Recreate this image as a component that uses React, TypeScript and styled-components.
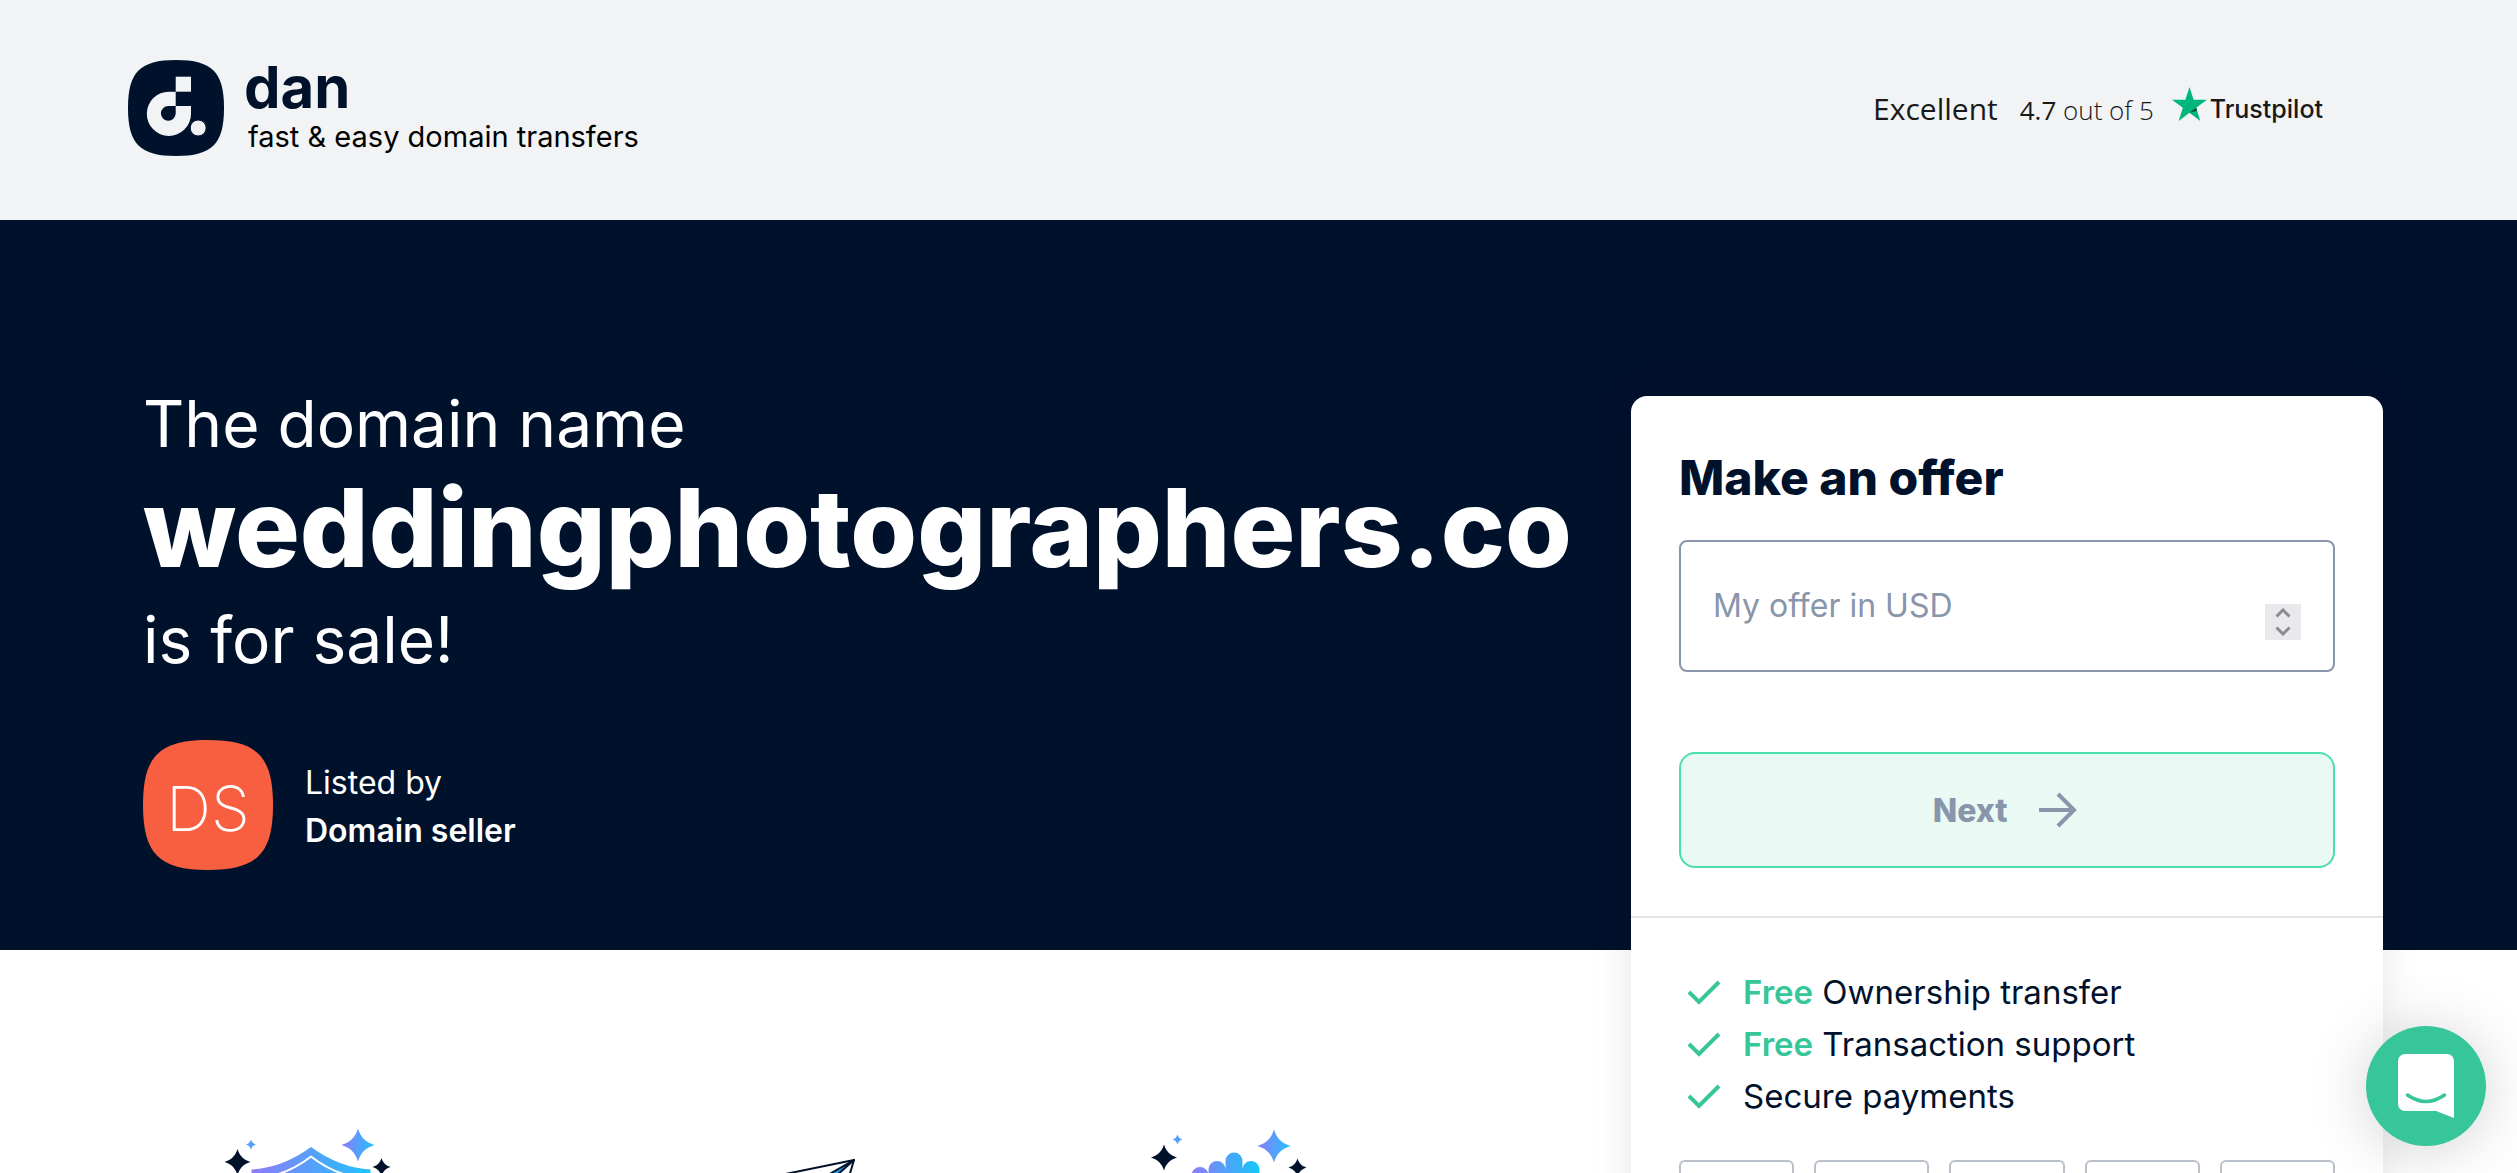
import React, { useState } from "react";
import styled, { createGlobalStyle } from "styled-components";

const navy = "#00112c";
const green = "#37c699";
const slate = "#8995ab";

const GlobalStyle = createGlobalStyle`
  * { box-sizing: border-box; }
  body {
    margin: 0;
    background: #fff;
    color: ${navy};
    font-family: Inter, "Liberation Sans", sans-serif;
  }
  h1, h2, p, ul { margin: 0; padding: 0; }
`;

const Page = styled.div`
  height: 100vh;
  overflow: hidden;
`;

const Header = styled.header`
  display: flex;
  align-items: center;
  justify-content: space-between;
  height: 220px;
  padding: 0 194px 4px 128px;
  background: #f1f3f4;
`;

const Brand = styled.a`
  display: flex;
  align-items: center;
  gap: 20px;
  color: ${navy};
  text-decoration: none;
`;

const BrandText = styled.span`
  display: flex;
  flex-direction: column;
  gap: 2px;
  padding-top: 4px;
`;

const BrandName = styled.span`
  font-size: 58px;
  font-weight: 700;
  line-height: 52px;
`;

const Tagline = styled.span`
  padding-left: 4px;
  color: #000;
  font-size: 29px;
  line-height: 44px;
`;

const Rating = styled.a`
  display: flex;
  align-items: center;
  gap: 18px;
  color: #191919;
  font-family: "Open Sans", "Noto Sans", sans-serif;
  text-decoration: none;
`;

const RatingText = styled.span`
  display: flex;
  align-items: baseline;
  gap: 22px;
  padding-top: 2px;
  line-height: 48px;
`;

const RatingWord = styled.span`
  font-size: 30px;
`;

const RatingScore = styled.span`
  font-size: 26px;
  font-weight: 300;
  b { font-weight: 400; }
`;

const Trustpilot = styled.span`
  display: flex;
  align-items: flex-start;
  gap: 3px;
  margin-bottom: 8px;
  font-family: Inter, sans-serif;
  font-size: 25px;
  font-weight: 500;
  line-height: 24px;
`;

const TrustpilotName = styled.span`
  padding-top: 10px;
`;

const Hero = styled.section`
  position: relative;
  z-index: 1;
  display: grid;
  grid-template-columns: minmax(0, 1fr) 752px;
  align-items: start;
  padding: 172px 134px 80px 143px;
  background: ${navy};
  color: #fff;
`;

const Headline = styled.h1`
  display: flex;
  flex-direction: column;
  font-size: 64px;
  font-weight: 400;
  line-height: 64px;
  white-space: nowrap;
`;

const DomainName = styled.strong`
  margin-bottom: 8px;
  font-size: 108px;
  font-weight: 800;
  line-height: 144px;
`;

const Seller = styled.div`
  display: flex;
  align-items: center;
  gap: 32px;
  margin-top: 68px;
  font-size: 32px;
  line-height: 48px;
`;

const SellerText = styled.div`
  padding-top: 4px;
`;

const Avatar = styled.svg`
  display: block;
  width: 130px;
  height: 130px;
`;

const SellerName = styled.p`
  font-weight: 600;
`;

const Card = styled.aside`
  margin: 4px 0 -600px;
  border-radius: 16px;
  background: #fff;
  color: ${navy};
  box-shadow: 0 0 40px rgba(0, 0, 0, 0.1);
`;

const OfferForm = styled.form`
  padding: 48px;
  border-bottom: 2px solid #e5e5e5;
`;

const CardTitle = styled.h2`
  font-size: 48px;
  font-weight: 800;
  line-height: 68px;
`;

const Field = styled.div`
  display: flex;
  align-items: center;
  height: 132px;
  margin: 28px 0 80px;
  padding: 0 32px;
  border: 2px solid ${slate};
  border-radius: 8px;
`;

const OfferInput = styled.input`
  flex: 1;
  min-width: 0;
  padding: 0;
  border: 0;
  outline: 0;
  background: none;
  color: ${navy};
  font-family: inherit;
  font-size: 32px;
  line-height: 48px;
  appearance: textfield;
  &::placeholder { color: ${slate}; opacity: 1; }
  &::-webkit-inner-spin-button { appearance: none; }
`;

const Stepper = styled.div`
  display: flex;
  flex-direction: column;
  align-self: flex-end;
  margin-bottom: 30px;
`;

const StepButton = styled.button`
  display: flex;
  align-items: center;
  justify-content: center;
  width: 36px;
  height: 18px;
  padding: 0;
  border: 0;
  background: #e9e8ec;
  color: #8b8b90;
`;

const NextButton = styled.button`
  display: flex;
  align-items: center;
  justify-content: center;
  gap: 32px;
  width: 100%;
  height: 116px;
  padding: 0 4px 0 0;
  border: 2px solid #4bdfae;
  border-radius: 16px;
  background: #e9faf5;
  color: ${slate};
  font-family: inherit;
  font-size: 32px;
  font-weight: 800;
`;

const Benefits = styled.div`
  padding: 48px;
`;

const BenefitList = styled.ul`
  list-style: none;
  font-size: 33px;
  line-height: 52px;
`;

const Benefit = styled.li`
  display: flex;
  align-items: center;
  gap: 22px;
  padding-left: 8px;
  b { color: ${green}; font-weight: 600; }
`;

const PaymentMethods = styled.div`
  display: grid;
  grid-template-columns: repeat(5, 1fr);
  gap: 20px;
  margin-top: 38px;
`;

const PaymentMethod = styled.div`
  height: 72px;
  border: 2px solid #bac0ca;
  border-radius: 6px;
`;

const Features = styled.section`
  display: grid;
  grid-template-columns: repeat(3, 1fr);
  justify-items: center;
  padding: 160px 1052px 0 80px;
`;

const ChatButton = styled.button`
  position: fixed;
  z-index: 2;
  right: 31px;
  bottom: 27px;
  display: flex;
  align-items: center;
  justify-content: center;
  width: 120px;
  height: 120px;
  padding: 0;
  border: 0;
  border-radius: 50%;
  background: ${green};
  box-shadow: 0 4px 60px rgba(0, 0, 0, 0.18);
`;

const Squircle = ({ fill }: { fill: string }) => (
  <path
    fill={fill}
    d="M48 0C84 0 96 12 96 48S84 96 48 96 0 84 0 48 12 0 48 0Z"
  />
);

const LogoMark = () => (
  <svg width="96" height="96" viewBox="0 0 96 96" aria-hidden="true">
    <Squircle fill={navy} />
    <path fill="#f1f3f4" d="M47.7 16.7H63V31.7H47.7Z" />
    <path
      fill="#f1f3f4"
      fillRule="evenodd"
      d="M47.7 31.7H41A22.1 22.1 0 1 0 63 54V46H47.7ZM47.7 46V53.6A7.4 7.4 0 1 1 40.3 46Z"
    />
    <circle cx="70.2" cy="68" r="8" fill="#f1f3f4" stroke={navy} strokeWidth="1" />
  </svg>
);

const TrustStar = () => (
  <svg width="35" height="34" viewBox="0 0 34 33" aria-hidden="true">
    <path fill="#00b67a" d="M17 0L21 12.4H34L23.500 20.200 27.500 33 17 25 6.500 33 10.500 20.200 0 12.4H13Z" />
    <path fill="#005128" d="M24.400 23L23.500 20.200 17 25Z" />
  </svg>
);

const Check = () => (
  <svg width="34" height="26" viewBox="0 0 34 26" fill="none" aria-hidden="true">
    <path d="M2 13L12 23 32 3" stroke={green} strokeWidth="4" />
  </svg>
);

type StarProps = { x: number; y: number; r: number; fill?: string };

const Sparkle = ({ x, y, r, fill = navy }: StarProps) => (
  <path
    transform={`translate(${x} ${y}) scale(${r})`}
    fill={fill}
    d="M0-1C.17-.46.46-.17 1 0 .46.17.17.46 0 1-.17.46-.46.17-1 0-.46-.17-.17-.46 0-1Z"
  />
);

const Gradient = ({ id, local }: { id: string; local?: boolean }) => (
  <linearGradient
    id={id}
    gradientUnits={local ? "objectBoundingBox" : "userSpaceOnUse"}
    x1={local ? 0 : 40}
    x2={local ? 1 : 160}
    y1="0"
    y2="0"
  >
    <stop offset="0" stopColor="#8f7bf7" />
    <stop offset="0.5" stopColor="#569ffb" />
    <stop offset="1" stopColor="#1fc3fd" />
  </linearGradient>
);

const ShieldArt = () => (
  <svg width="200" height="200" viewBox="0 0 200 200" aria-hidden="true">
    <defs>
      <Gradient id="shield" />
      <Gradient id="shieldStar" local />
    </defs>
    <path fill="url(#shield)" d="M100 37Q129 58 159.500 59.500V110Q155 160 100 190 45 160 40.500 110V59.500Q71 58 100 37Z" />
    <path fill="none" stroke="#fff" strokeWidth="2" d="M100 46.500Q122 64 150 68V110Q146 154 100 180 54 154 50 110V68Q78 64 100 46.500Z" />
    <Sparkle x={26.5} y={52} r={13} />
    <Sparkle x={40} y={34.5} r={5} fill="#569ffb" />
    <Sparkle x={147} y={35} r={16.5} fill="url(#shieldStar)" />
    <Sparkle x={170.5} y={57} r={9} />
  </svg>
);

const PlaneArt = () => (
  <svg width="200" height="200" viewBox="0 0 200 200" aria-hidden="true">
    <path fill="#1fa7f2" stroke={navy} strokeWidth="2" strokeLinejoin="round" d="M182 50L88 104V140L112 112Z" />
    <path fill="none" stroke={navy} strokeWidth="2" strokeLinejoin="round" d="M88 104L40 79 182 50 158 130 112 112" />
  </svg>
);

const BadgeArt = () => (
  <svg width="200" height="200" viewBox="0 0 200 200" aria-hidden="true">
    <defs>
      <linearGradient id="badge" gradientUnits="userSpaceOnUse" x1="58" x2="126" y1="0" y2="0">
        <stop offset="0" stopColor="#8f7bf7" />
        <stop offset="1" stopColor="#12c8fb" />
      </linearGradient>
      <Gradient id="badgeStar" local />
    </defs>
    <path
      fill="url(#badge)"
      d="M57.500 130V65.500a8.500 8.500 0 0 1 17 0V59.500a8.500 8.500 0 0 1 17 0V51a8.500 8.500 0 0 1 17 0V59.500a8.500 8.500 0 0 1 17 0V130Z"
    />
    <Sparkle x={30} y={47.5} r={13} />
    <Sparkle x={43.5} y={29.5} r={5} fill="#569ffb" />
    <Sparkle x={140} y={36} r={16.5} fill="url(#badgeStar)" />
    <Sparkle x={163.5} y={57.5} r={9} />
  </svg>
);

const methods = ["one", "two", "three", "four", "five"];

export default function App() {
  const [offer, setOffer] = useState("");
  const step = (by: number) => setOffer(String(Math.max(0, Number(offer) + by)));

  return (
    <Page>
      <GlobalStyle />
      <Header>
        <Brand href="#">
          <LogoMark />
          <BrandText>
            <BrandName>dan</BrandName>
            <Tagline>fast &amp; easy domain transfers</Tagline>
          </BrandText>
        </Brand>
        <Rating href="#">
          <RatingText>
            <RatingWord>Excellent</RatingWord>
            <RatingScore>
              <b>4.7</b> out of 5
            </RatingScore>
          </RatingText>
          <Trustpilot>
            <TrustStar />
            <TrustpilotName>Trustpilot</TrustpilotName>
          </Trustpilot>
        </Rating>
      </Header>

      <Hero>
        <div>
          <Headline>
            <span>The domain name</span>
            <DomainName>weddingphotographers.co</DomainName>
            <span>is for sale!</span>
          </Headline>
          <Seller>
            <Avatar viewBox="0 0 96 96" aria-hidden="true">
              <Squircle fill="#f85e40" />
              <text x="48" y="67" textAnchor="middle" fill="#fff" fontSize="46" fontWeight="200">
                DS
              </text>
            </Avatar>
            <SellerText>
              <p>Listed by</p>
              <SellerName>Domain seller</SellerName>
            </SellerText>
          </Seller>
        </div>

        <Card>
          <OfferForm onSubmit={(e) => e.preventDefault()}>
            <CardTitle>Make an offer</CardTitle>
            <Field>
              <OfferInput
                type="number"
                aria-label="My offer in USD"
                placeholder="My offer in USD"
                value={offer}
                onChange={(e) => setOffer(e.target.value)}
              />
              <Stepper>
                <StepButton type="button" aria-label="Increase offer" onClick={() => step(1)}>
                  <svg width="16" height="10" viewBox="0 0 16 10" fill="none">
                    <path d="M1.500 8.500L8 2 14.500 8.500" stroke="currentColor" strokeWidth="3" />
                  </svg>
                </StepButton>
                <StepButton type="button" aria-label="Decrease offer" onClick={() => step(-1)}>
                  <svg width="16" height="10" viewBox="0 0 16 10" fill="none">
                    <path d="M1.500 1.500L8 8 14.500 1.500" stroke="currentColor" strokeWidth="3" />
                  </svg>
                </StepButton>
              </Stepper>
            </Field>
            <NextButton type="submit">
              Next
              <svg width="38" height="36" viewBox="0 0 38 36" fill="none" aria-hidden="true">
                <path d="M0 18H35M19 2L35 18 19 34" stroke="currentColor" strokeWidth="4" />
              </svg>
            </NextButton>
          </OfferForm>
          <Benefits>
            <BenefitList>
              <Benefit>
                <Check />
                <span><b>Free</b> Ownership transfer</span>
              </Benefit>
              <Benefit>
                <Check />
                <span><b>Free</b> Transaction support</span>
              </Benefit>
              <Benefit>
                <Check />
                <span>Secure payments</span>
              </Benefit>
            </BenefitList>
            <PaymentMethods>
              {methods.map((m) => (
                <PaymentMethod key={m} />
              ))}
            </PaymentMethods>
          </Benefits>
        </Card>
      </Hero>

      <Features>
        <ShieldArt />
        <PlaneArt />
        <BadgeArt />
      </Features>

      <ChatButton type="button" aria-label="Open chat">
        <svg width="56" height="64" viewBox="0 0 56 64" aria-hidden="true">
          <path fill="#fff" d="M7 0H49a7 7 0 0 1 7 7V64L38 57H7a7 7 0 0 1-7-7V7a7 7 0 0 1 7-7Z" />
          <path fill="none" stroke={green} strokeWidth="3.500" strokeLinecap="round" d="M9.500 41Q28 54 46.500 41" />
        </svg>
      </ChatButton>
    </Page>
  );
}
